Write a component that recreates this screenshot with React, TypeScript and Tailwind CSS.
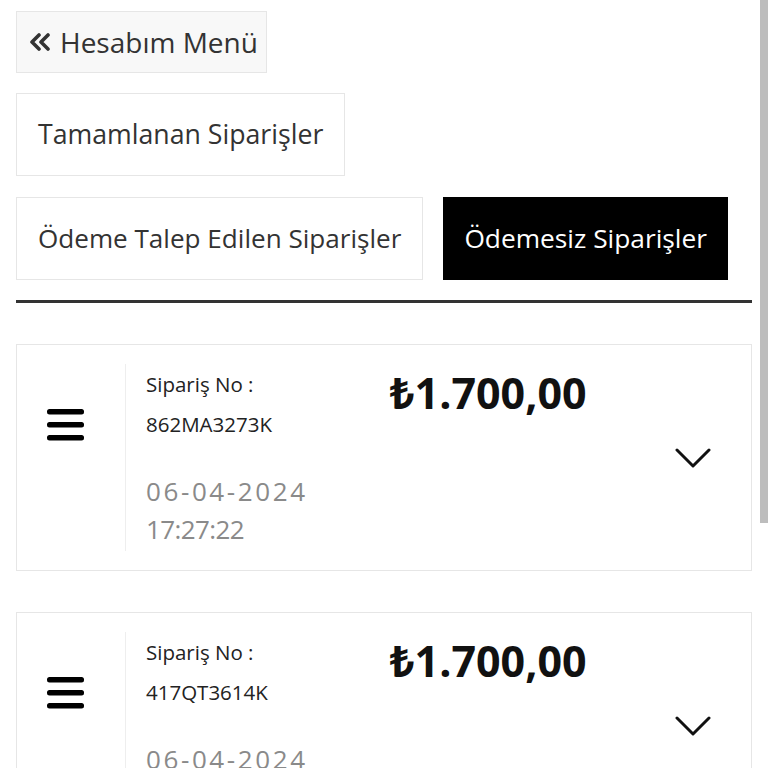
import React from "react";

const orders = [
  { id: "862MA3273K", date: "06-04-2024", time: "17:27:22", total: "₺1.700,00" },
  { id: "417QT3614K", date: "06-04-2024", time: "17:27:22", total: "₺1.700,00" },
];

function DoubleLeft() {
  return (
    <svg width="22" height="18" viewBox="0 0 22 18" fill="none">
      <path d="M10 2 L3 9 L10 16" stroke="#333" strokeWidth="3.6" strokeLinejoin="round" strokeLinecap="round" />
      <path d="M19 2 L12 9 L19 16" stroke="#333" strokeWidth="3.6" strokeLinejoin="round" strokeLinecap="round" />
    </svg>
  );
}

function Hamburger() {
  return (
    <svg width="37" height="32" viewBox="0 0 37 32">
      <rect x="0" y="0" width="37" height="5.5" rx="2.5" fill="#000" />
      <rect x="0" y="13" width="37" height="5.5" rx="2.5" fill="#000" />
      <rect x="0" y="26" width="37" height="5.5" rx="2.5" fill="#000" />
    </svg>
  );
}

function ChevronDown() {
  return (
    <svg width="36" height="20" viewBox="0 0 36 20" fill="none">
      <path d="M2 2 L18 18 L34 2" stroke="#111" strokeWidth="3" strokeLinecap="round" strokeLinejoin="round" />
    </svg>
  );
}

function OrderCard({ order }: { order: (typeof orders)[number] }) {
  return (
    <div className="flex h-[227px] border border-[#e6e6e6] bg-white py-[19px]">
      <div className="w-[108px] shrink-0 pl-[30px] pt-[45px]">
        <Hamburger />
      </div>
      <div className="w-[265px] shrink-0 border-l border-[#eeeeee] pl-[20px]">
        <p className="text-[20.5px] leading-[40px] text-[#222]">Sipariş No :</p>
        <p className="text-[20.5px] leading-[40px] text-[#222]">{order.id}</p>
        <p className="mt-[28px] text-[26px] leading-[38px] tracking-[2.6px] text-[#8a8a8a]">{order.date}</p>
        <p className="text-[26px] leading-[38px] tracking-[-0.6px] text-[#8a8a8a]">{order.time}</p>
      </div>
      <div className="flex-1 pt-[4px]">
        <p className="text-[43px] font-bold leading-[50px] text-[#111]">{order.total}</p>
      </div>
      <div className="flex items-center pr-[40px]">
        <ChevronDown />
      </div>
    </div>
  );
}

export default function App() {
  return (
    <div
      className="relative min-h-screen bg-white px-4 pt-[11px] pb-10"
      style={{ fontFamily: '"Open Sans", "Noto Sans", sans-serif' }}
    >
      {/* Account menu */}
      <button className="flex h-[62px] w-[251px] items-center gap-[9px] border border-[#e6e6e6] bg-[#f8f8f8] pl-[12px] text-[28px] text-[#333]">
        <DoubleLeft />
        <span>Hesabım Menü</span>
      </button>

      {/* Tabs */}
      <div className="mt-[20px] flex">
        <button className="flex h-[83px] items-center border border-[#e6e6e6] bg-white px-[21px] text-[26.7px] text-[#333]">
          Tamamlanan Siparişler
        </button>
      </div>
      <div className="mt-[21px] flex gap-[20px]">
        <button className="flex h-[83px] items-center border border-[#e6e6e6] bg-white px-[21px] text-[26.1px] text-[#333]">
          Ödeme Talep Edilen Siparişler
        </button>
        <button className="flex h-[83px] items-center bg-black px-[21px] text-[26.3px] text-white">
          Ödemesiz Siparişler
        </button>
      </div>

      <div className="mt-[20px] h-[3px] bg-[#333]" />

      {/* Orders */}
      <div className="mt-[41px] flex flex-col gap-[41px]">
        {orders.map((o) => (
          <OrderCard key={o.id} order={o} />
        ))}
      </div>

      {/* scrollbar thumb */}
      <div className="fixed right-0 top-0 h-[523px] w-[8px] bg-[#bdbdbd]" />
    </div>
  );
}
